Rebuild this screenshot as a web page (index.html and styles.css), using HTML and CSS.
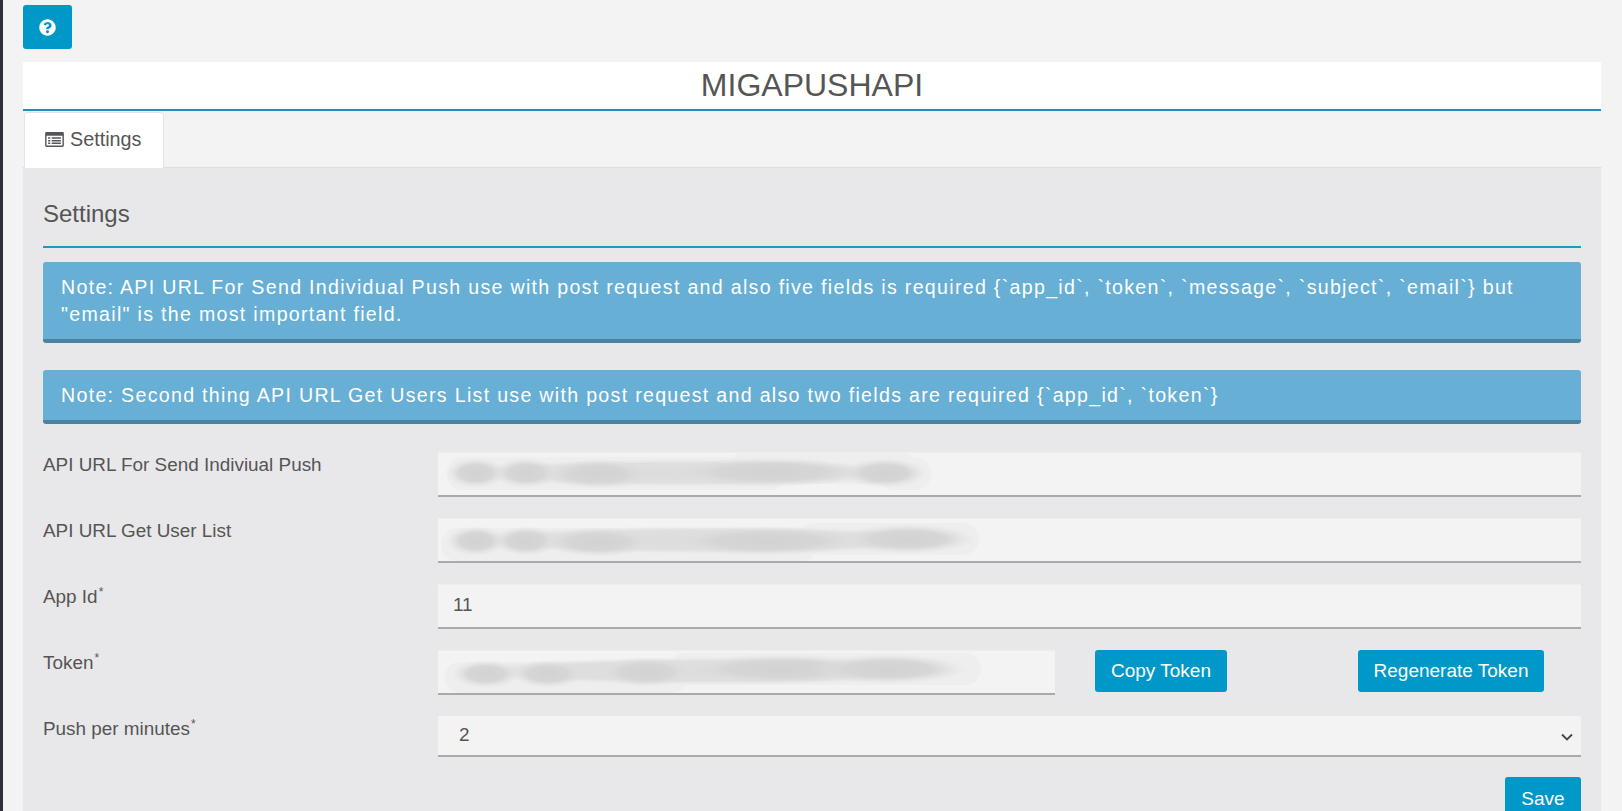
FILE: index.html
```html
<!DOCTYPE html>
<html lang="en">
<head>
<meta charset="utf-8">
<title>MIGAPUSHAPI</title>
<link rel="stylesheet" href="styles.css">
</head>
<body>
<svg class="defs" aria-hidden="true"><defs>
  <radialGradient id="ink"><stop offset="0" stop-color="#d2d2d2"/><stop offset=".55" stop-color="#d6d6d6"/><stop offset="1" stop-color="#e2e2e2" stop-opacity="0"/></radialGradient>
  <radialGradient id="ink-faint"><stop offset="0" stop-color="#dcdcdc"/><stop offset=".7" stop-color="#dfdfdf"/><stop offset="1" stop-color="#e8e8e8" stop-opacity="0"/></radialGradient>
</defs></svg>
<div class="strip"></div>
<main class="page">
  <div class="help-row">
    <button class="btn btn-help" aria-label="Help">
      <svg class="help-icon" viewBox="0 0 512 512"><path fill="#fff" d="M504 256c0 136.997-111.043 248-248 248S8 392.997 8 256C8 119.083 119.043 8 256 8s248 111.083 248 248zM262.655 90c-54.497 0-89.255 22.957-116.549 63.758-3.536 5.286-2.353 12.415 2.715 16.258l34.699 26.31c5.205 3.947 12.621 3.008 16.665-2.122 17.864-22.658 30.113-35.797 57.303-35.797 20.429 0 45.698 13.148 45.698 32.958 0 14.976-12.363 22.667-32.534 33.976C247.128 238.528 216 254.941 216 296v4c0 6.627 5.373 12 12 12h56c6.627 0 12-5.373 12-12v-1.333c0-28.462 83.186-29.647 83.186-106.667 0-58.002-60.165-102-116.531-102zM256 338c-25.365 0-46 20.635-46 46 0 25.364 20.635 46 46 46s46-20.636 46-46c0-25.365-20.635-46-46-46z"/></svg>
    </button>
  </div>
  <h1 class="title">MIGAPUSHAPI</h1>
  <div class="tabs">
    <div class="tab">
      <svg class="tab-icon" viewBox="0 0 20 16"><path fill="#55555a" fill-rule="evenodd" d="M1.500 0h17A1.500 1.500 0 0 1 20 1.500v13a1.500 1.500 0 0 1-1.500 1.500h-17A1.500 1.500 0 0 1 0 14.500v-13A1.500 1.500 0 0 1 1.500 0zM1.500 4v10.200q0 .3.3.3h16.400q.3 0 .3-.3V4zM3.200 5.600h2.300v1.500H3.200zM7 5.600h9.800v1.500H7zM3.200 8.500h2.300V10H3.200zM7 8.500h9.800V10H7zM3.200 11.300h2.300v1.500H3.200zM7 11.300h9.800v1.500H7z"/></svg>
      <span>Settings</span>
    </div>
  </div>
  <section class="panel">
    <h2 class="panel-title">Settings</h2>
    <p class="note note-first">Note: API URL For Send Individual Push use with post request and also five fields is required {`app_id`, `token`, `message`, `subject`, `email`} but "email" is the most important field.</p>
    <p class="note note-second">Note: Second thing API URL Get Users List use with post request and also two fields are required {`app_id`, `token`}</p>
    <form class="form">
      <div class="row">
        <label class="label">API URL For Send Indiviual Push</label>
        <div class="field">
          <svg class="smear" viewBox="0 1 560 42" aria-hidden="true">
            <g class="smear-base"><rect x="9" y="5" width="340" height="33" rx="16"/><rect x="290" y="1" width="190" height="31" rx="15"/><rect x="440" y="5" width="53" height="33" rx="16"/></g>
            <ellipse class="blob-faint" cx="245" cy="21" rx="238" ry="14"/>
            <ellipse class="blob" cx="38" cy="21" rx="30" ry="15"/><ellipse class="blob" cx="88" cy="21" rx="33" ry="15"/><ellipse class="blob" cx="160" cy="22" rx="55" ry="15"/><ellipse class="blob" cx="332" cy="20" rx="100" ry="15"/><ellipse class="blob" cx="447" cy="21" rx="42" ry="15"/>
          </svg>
        </div>
      </div>
      <div class="row">
        <label class="label">API URL Get User List</label>
        <div class="field">
          <svg class="smear" viewBox="0 1 560 42" aria-hidden="true">
            <g class="smear-base"><rect x="3" y="10" width="377" height="33" rx="16"/><rect x="360" y="5" width="181" height="32" rx="16"/></g>
            <ellipse class="blob-faint" cx="272" cy="22" rx="265" ry="14"/>
            <ellipse class="blob" cx="38" cy="23" rx="30" ry="15"/><ellipse class="blob" cx="88" cy="23" rx="33" ry="15"/><ellipse class="blob" cx="160" cy="24" rx="55" ry="15"/><ellipse class="blob" cx="330" cy="23" rx="100" ry="15"/><ellipse class="blob" cx="470" cy="21" rx="68" ry="15"/>
          </svg>
        </div>
      </div>
      <div class="row">
        <label class="label">App Id<sup class="req">*</sup></label>
        <input class="field field-input" type="text" value="11">
      </div>
      <div class="row">
        <label class="label">Token<sup class="req">*</sup></label>
        <div class="token-line">
          <div class="field field-token">
            <svg class="smear" viewBox="0 1 560 42" aria-hidden="true">
              <g class="smear-base"><rect x="7" y="12" width="243" height="31" rx="15"/><rect x="231" y="3" width="312" height="32" rx="16"/></g>
              <ellipse class="blob-faint" cx="272" cy="21" rx="262" ry="14"/>
              <ellipse class="blob" cx="48" cy="24" rx="34" ry="14"/><ellipse class="blob" cx="110" cy="24" rx="36" ry="14"/><ellipse class="blob" cx="208" cy="22" rx="48" ry="15"/><ellipse class="blob" cx="345" cy="19" rx="100" ry="15"/><ellipse class="blob" cx="450" cy="19" rx="78" ry="15"/>
            </svg>
          </div>
          <button type="button" class="btn btn-copy">Copy Token</button>
          <button type="button" class="btn btn-regen">Regenerate Token</button>
        </div>
      </div>
      <div class="row row-select">
        <label class="label">Push per minutes<sup class="req">*</sup></label>
        <div class="select-wrap">
          <select class="select"><option>2</option></select>
          <svg class="chevron" viewBox="0 0 12 8"><path d="M1 1.500l5 5 5-5" fill="none" stroke="#444" stroke-width="1.800"/></svg>
        </div>
      </div>
      <div class="actions">
        <button type="button" class="btn btn-save">Save</button>
      </div>
    </form>
  </section>
</main>
</body>
</html>
```
FILE: styles.css
```css
* { box-sizing: border-box; }
html, body { height: 100%; }
body {
  margin: 0;
  height: 811px;
  overflow: hidden;
  display: flex;
  background: #f3f3f3;
  color: #555;
  font-family: "Liberation Sans", Arial, sans-serif;
}
.defs { position: absolute; width: 0; height: 0; }
.strip { width: 3px; flex: none; background: #2e2e36; }
.page { width: 1578px; margin-left: 20px; flex: none; }
.help-row { padding-top: 5px; height: 62px; }
.btn {
  border: 0;
  border-radius: 3px;
  background: #0098c8;
  color: #fff;
  font-family: inherit;
  font-size: 19px;
  cursor: pointer;
  padding: 0;
}
.btn-help {
  width: 49px;
  height: 44px;
  display: flex;
  align-items: center;
  justify-content: center;
}
.help-icon { width: 17px; height: 17px; }
.title {
  margin: 0;
  height: 49px;
  background: #fff;
  border-bottom: 2px solid #1f8fb5;
  font-size: 32px;
  font-weight: 400;
  line-height: 47px;
  text-align: center;
}
.tabs {
  height: 57px;
  padding: 1px 0 0 1px;
  border-bottom: 1px solid #ddd;
}
.tab {
  width: 140px;
  height: 56px;
  background: #fff;
  border: 1px solid #e4e4e4;
  border-bottom: 0;
  border-radius: 4px 4px 0 0;
  display: flex;
  align-items: center;
  gap: 6px;
  padding: 0 0 3px 20px;
  font-size: 19.8px;
}
.tab-icon { width: 19px; height: 15px; flex: none; }
.panel {
  background: #e8e8ea;
  height: 700px;
  padding: 0 20px;
}
.panel-title {
  margin: 0;
  height: 80px;
  padding-top: 32px;
  border-bottom: 2px solid #1f99c0;
  font-size: 24px;
  font-weight: 400;
  line-height: 28px;
}
.note {
  margin: 0;
  background: #67afd4;
  border-bottom: 4px solid #4a83a1;
  border-radius: 3px;
  color: #fff;
  font-size: 19.6px;
  line-height: 27px;
  letter-spacing: 1.3px;
  padding: 12px 17px 11px 18px;
}
.note-first { margin-top: 14px; }
.note-second { margin-top: 27px; }
.form { margin-top: 28px; }
.row {
  display: grid;
  grid-template-columns: 395px 1fr;
  height: 66px;
}
.label { font-size: 18.9px; line-height: 24px; padding-top: 1px; }
.req { font-size: 12px; line-height: 0; vertical-align: 7px; margin-left: 1px; }
.field {
  display: flex;
  align-items: center;
  height: 45px;
  background: #f3f3f3;
  border: 0;
  border-top: 1px solid #eee;
  border-bottom: 2px solid #aaa;
  min-width: 0;
  padding: 0;
}
.field-input {
  width: 100%;
  padding: 0 0 2px 15px;
  color: #555;
  font-family: inherit;
  font-size: 18.9px;
  outline: 0;
}
.smear { width: 560px; height: 42px; flex: none; }
.smear-base rect { fill: #eeeeee; }
.blob { fill: url(#ink); }
.blob-faint { fill: url(#ink-faint); }
.token-line { display: flex; align-items: flex-start; }
.field-token { width: 617px; flex: none; }
.btn-copy { width: 132px; height: 42px; margin-left: 40px; padding-bottom: 1px; }
.btn-regen { width: 186px; height: 42px; margin-left: 131px; padding-bottom: 1px; }
.row-select { height: 61px; }
.select-wrap { position: relative; height: 41px; }
.select {
  width: 100%;
  height: 41px;
  appearance: none;
  background: #f3f3f3;
  border: 0;
  border-bottom: 2px solid #aaa;
  padding: 0 0 3px 21px;
  color: #555;
  font-family: inherit;
  font-size: 18.9px;
  border-radius: 0;
  outline: 0;
}
.chevron {
  position: absolute;
  right: 8px;
  top: 17px;
  width: 12px;
  height: 8px;
}
.actions { display: flex; justify-content: flex-end; }
.btn-save { width: 76px; height: 43px; }
```
